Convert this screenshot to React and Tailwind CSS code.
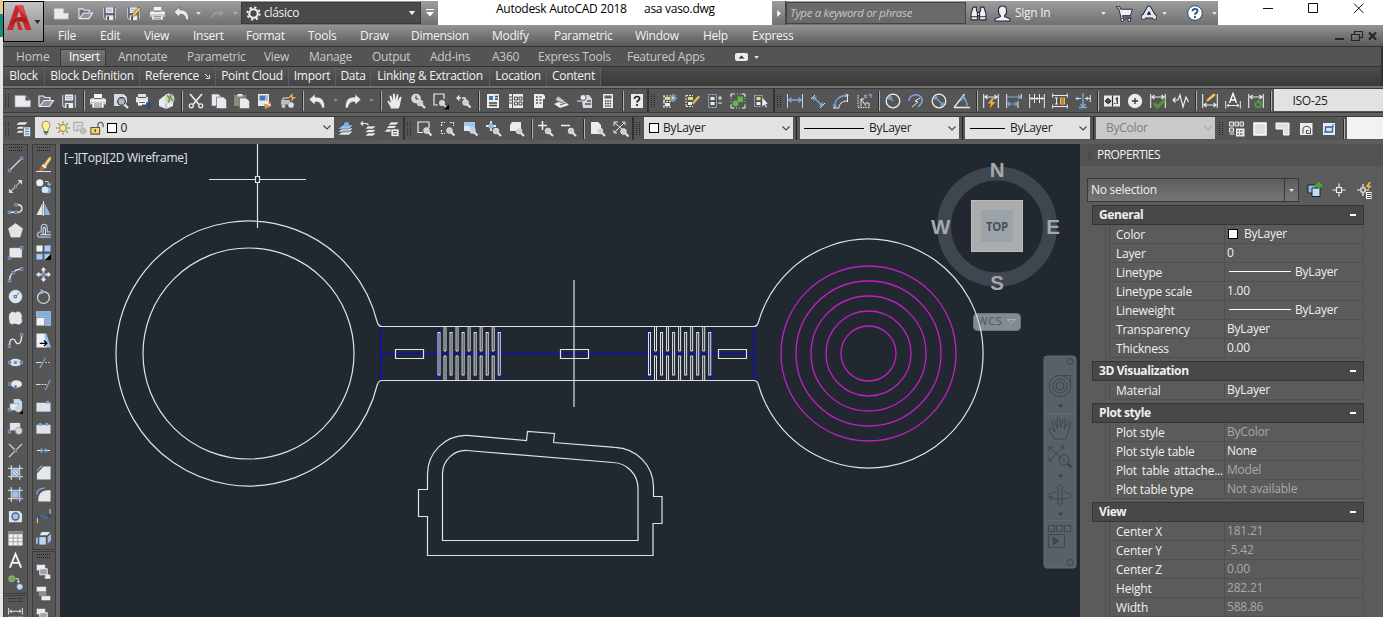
import React from "react";

const W = "#e9ebee";
const B = "#7ea6db";

const Lens = ({ x = 10, y = 10 }) => (
  <g>
    <path d={`M${x + 1.5} ${y + 1.5}l3.5 3.5`} stroke="#dfe2e6" strokeWidth="2.2" />
    <circle cx={x} cy={y} r="2.9" fill="#c9ced6" stroke="#f1f1f1" strokeWidth=".6" />
  </g>
);
const Disk = () => (
  <g>
    <path d="M1 1.500h14v13.500H3l-2-2z" fill="#5d6675" />
    <path d="M1.600 2v10.500l2 2M14.400 2v12.500" stroke="#b9c1ce" strokeWidth="1.200" fill="none" />
    <path d="M4 1.500h8v6H4z" fill="#eceef2" />
    <path d="M5 3.500h6M5 5.500h6" stroke="#8d96a6" strokeWidth=".8" />
    <path d="M4 10h8v5H4z" fill="#eceef2" />
    <path d="M5.500 11h2v4h-2z" fill="#444b57" />
  </g>
);
const Printer = () => (
  <g>
    <path d="M4 1h8v5H4z" fill="#f4f5f7" />
    <path d="M0 6.500l2-1.500h12l2 1.500v5H0z" fill="#c7ccd3" />
    <path d="M0 6.500h16v2H0z" fill="#f2f3f5" />
    <path d="M3 10h10l1 4.500H2z" fill="#fff" />
    <path d="M4 11h8M4 13h8M4 5.500h8" stroke="#4a4f58" strokeWidth=".8" />
  </g>
);
const DimH = ({ y = 5, c = W }) => (
  <path d={`M.7 1v14M15.300 1v14M2 ${y}h12M4.500 ${y - 2}L2 ${y}l2.500 2M11.500 ${y - 2}L14 ${y}l-2.500 2`} stroke={c} strokeWidth="1.100" fill="none" />
);
const Dot = ({ x, y }) => <rect x={x - 1.300} y={y - 1.300} width="2.600" height="2.600" fill="#4c5d7a" stroke={B} strokeWidth=".9" />;
const Check = () => <path d="M4 10l3.500 4L15 6.500" stroke="#4f9a3c" strokeWidth="3" fill="none" />;

const art = {
  newdoc: <path d="M0 2.500h10.500L15.500 7.500v6.500H0z M10.500 2.500v5h5" fill={W} stroke="#9aa0a8" strokeWidth=".7" />,
  open: (
    <g>
      <path d="M1 13.500V3h4.500L7 4.500h5V7" fill="#6a6f77" stroke={W} strokeWidth="1.200" />
      <path d="M1.500 13.500l4.500-6h9.500L11.500 13.500z" fill="#8b949f" stroke={W} strokeWidth="1.200" />
    </g>
  ),
  save: <Disk />,
  saveas: <g><Disk /><path d="M6 12l1.500-4 6-7 2.500 2-6.500 7.500z" fill="#f0c05a" stroke="#6a4a14" strokeWidth=".6" /></g>,
  print: <Printer />,
  preview: <g><path d="M1 1h9l4 3.500V9l-3 4H1z" fill="#d8dbe0" /><path d="M10 1v3.500h4" fill="#fff" stroke="#999" strokeWidth=".5" /><circle cx="8.500" cy="8.500" r="3.800" fill="#a9b7c9" stroke="#33373d" strokeWidth="1.200" /><path d="M11.500 11.500l3.500 3.500" stroke="#e6e6e6" strokeWidth="2.300" /></g>,
  publish: <g><path d="M2 1h8v3H2zM0 4h12v5.500H0z" fill="#dfe2e6" /><path d="M2 8h8v4.500H2z" fill="#fff" /><path d="M2 4.500h8M3 9.500h6" stroke="#555" /><path d="M6 12.500h8M11.500 9.500l3.500 3-3.500 3" stroke="#2f4d80" strokeWidth="1.800" fill="none" /></g>,
  globe: <g><path d="M0 7l5-4 9 4v6l-7 3-7-3z" fill="#e9ebef" /><path d="M7 9.500v6" stroke="#9aa0a8" /><circle cx="10" cy="6" r="5.500" fill="#dfe2e6" /><circle cx="10.500" cy="5.500" r="4.300" fill="#dfcf92" /><path d="M8 2.500c3 1 3 5 1 7M12 1.500c-1 3 0 5 2.500 6" stroke="#4b9a76" strokeWidth="1.500" fill="none" /></g>,
  cut: <g stroke={W} fill="none"><path d="M2 1l9 10.500M14 1L5 11.500" strokeWidth="1.700" /><circle cx="3.300" cy="12.800" r="2" strokeWidth="1.300" /><circle cx="12.700" cy="12.800" r="2" strokeWidth="1.300" /></g>,
  copy: <g fill={W} stroke="#65696f" strokeWidth=".7"><path d="M.5 1h7l3 3v9h-10z" /><path d="M5.500 4h7l3 3v8.500h-10z" /></g>,
  paste: <g><path d="M0 2h12v11H0z" fill="#8d8878" /><path d="M3.500 1h5v2.500h-5z" fill="#e4e4e4" /><path d="M5.500 5h6.500l3.500 3v7.500h-10z" fill={W} stroke="#65696f" strokeWidth=".7" /></g>,
  match: <g><path d="M1 1h11v12H1z" fill={W} /><path d="M2.500 2.500h6v5h-6z" fill="#3f78bf" /><path d="M10 2v6" stroke="#888" /><path d="M7 11l7-2-1 5-5 2z" fill="#d79a45" /><path d="M8 9.500l6 3" stroke="#fff" strokeWidth="1.300" /></g>,
  blockedit: <g><path d="M1 7h9v4.500H1z" fill="#b9bec7" /><path d="M3 7V5h6" stroke={W} fill="none" /><circle cx="3.500" cy="13" r="2" fill="#c3c8d0" /><circle cx="11" cy="12" r="3" fill="#dfe2e7" stroke="#777" strokeWidth=".5" /><path d="M12.500 0L8.500 4.500H12l-1 4L16 4h-3.500z" fill="#f2b744" /></g>,
  undo: <path d="M6 1L0 6.500 6 12V9c4-.500 6 1 7 6h2.500c.500-8-3-11-9.500-11z" fill={W} stroke="#50545a" strokeWidth=".6" />,
  redo: <path d="M10 1l6 5.500L10 12V9c-4-.500-6 1-7 6H.5C0 7 3.500 4 10 4z" fill={W} stroke="#50545a" strokeWidth=".6" />,
  redodim: <path d="M10 3l5 4.500L10 12V9.500C6 9 4 9.500 3 13H1.500c0-5 3-7.500 8.500-7.500z" fill="#9a9a9a" stroke="#828282" strokeWidth=".5" />,
  pan: <path d="M4 15.500C3 12 .5 9.500 .5 8.500s1-1 2 0l1.500 1.500L2.500 3.500c0-1.200 1.500-1.300 1.900-.3L6 7.500 5.900 1.500c0-1.400 1.900-1.400 2 0L8.400 7l1.200-5c.3-1.200 2-.9 1.800.5L10.600 8l2.200-3.700c.7-1 2.100-.3 1.700.9C13.300 8 13.500 13 11.500 15.500z" fill={W} />,
  zoomrt: <g><circle cx="6" cy="5.500" r="4.800" fill="#d7dadf" /><path d="M6 2.500v3.500h2.500" stroke="#333" fill="none" /><Lens x={10} y={10} /></g>,
  zoomwin: <g><path d="M1 10.500V1h11v6M1 10v1.500h5" stroke={W} fill="none" strokeWidth="1.200" /><Lens x={9.500} y={9.500} /></g>,
  zoomcorner: <g><path d="M1 10V1h10v5M1 10v2h4" stroke={W} fill="none" strokeWidth="1.200" /><circle cx="9" cy="10" r="3" fill="#d3d7dc" /><path d="M11 12l2 2" stroke={W} strokeWidth="1.500" /><path d="M16 11.500v5h-5z" fill="#000" /></g>,
  zoomprev: <g><path d="M1 5h4M3.500 2.500L1 5l2.500 2.500M6 5h3v2" stroke={W} fill="none" strokeWidth="1.300" /><Lens x={9.500} y={9.500} /></g>,
  zoomdash: <g><path d="M1.500 5V1.500H5M10 1.500h3.500V5M1.500 9v3.500H5" stroke={W} fill="none" strokeWidth="1.200" strokeDasharray="2 1" /><Lens x={9.500} y={9.500} /></g>,
  zoomblue: <g><path d="M1 1h11v9H1z" fill="#9cc8ee" /><path d="M1 5h6v5H1z" fill="#d6ecfb" /><Lens x={9.500} y={9.500} /></g>,
  zoomcen: <g><path d="M5 0v3M5 7v3M0 5h3M7 5h3" stroke={W} strokeWidth="1.800" /><circle cx="5" cy="5" r="2.600" fill="#8db8f2" /><Lens x={10} y={10} /></g>,
  zoomobj: <g><path d="M3 1h9v6l-3 3H1V4z" fill={W} /><Lens x={10} y={10} /></g>,
  zoomin: <g><path d="M4.500 0v9M0 4.500h9" stroke={W} strokeWidth="1.600" /><Lens x={10} y={10} /></g>,
  zoomout: <g><path d="M0 4.500h9" stroke={W} strokeWidth="1.600" /><Lens x={10} y={10} /></g>,
  zoomall: <g><path d="M1 1h7l3 3v9H1z" fill={W} /><Lens x={10} y={10} /></g>,
  zoomext: <g><path d="M2 2l9 8M11 2L2 11M1 5V1h4M9 1h3v3M1 9v3h3" stroke={W} fill="none" /><Lens x={10.500} y={10.500} /></g>,
  props: <g><path d="M2 1h12v14H2z" fill={W} /><path d="M4 3h4v4H4z" fill="#3f78bf" /><path d="M10 3.500h3M10 6h3M4 10h8M4 12.500h8" stroke="#444" strokeWidth="1.300" /></g>,
  dc: <g><path d="M1 1h3v14H1zM5 1h10v14H5z" fill={W} /><path d="M1 4h3M1 7h3M1 10h3" stroke="#444" /><path d="M6.500 4h3v3h-3zM11 4h3v3h-3zM6.500 9h3v3h-3zM11 9h3v3h-3z" fill="none" stroke="#444" /></g>,
  palette: <g><path d="M3 1h9l2 2v3h-2v9H3z" fill={W} /><path d="M5 4h2M8.500 4h2M5 7h2M8.500 7h2M5 10h2M8.500 10h2" stroke="#555" strokeWidth="1.600" /></g>,
  sheets: <g><path d="M0 11l9-4 6 5-9 3z" fill={W} /><path d="M1 7l3-4 7 5-3 2z" fill="#c4c9d1" stroke="#555" strokeWidth=".7" /><path d="M6 12l6-2" stroke="#666" /></g>,
  markup: <g><path d="M4 2h8l3 4v9H6z" fill="#d4d8de" /><path d="M1 3h7M1 6h5M10 8h4M8 11h6" stroke="#555" strokeWidth="1.300" /><circle cx="6" cy="4.500" r="3" fill={W} stroke="#555" /><path d="M0 8h5" stroke={W} /></g>,
  calc: <g><path d="M3 1h10v14H3z" fill={W} /><path d="M4.500 2.500h7v3h-7z" fill="#5a6069" /><path d="M5 8h6M5 10.500h6M5 13h6" stroke="#444" strokeWidth="1.500" strokeDasharray="1.500 .8" /></g>,
  help: <g><path d="M2 1h12v14H2z" fill={W} /><path d="M5.500 6c0-3.500 5-3 5-.3C10.500 7.500 8 7.500 8 9.500M8 11v2" stroke="#222" strokeWidth="1.700" fill="none" /></g>,
  ga: <g><path d="M3 3v11M2 3h7M2 8.500h9M2 14h8" stroke={W} strokeDasharray="2 1" /><path d="M4 4h5v3H4z" fill="#e6d76a" /><path d="M4 10h5v3H4z" fill={W} /><path d="M12 1v8M8 5h8M9.500 2l5 6M14.500 2l-5 6" stroke="#b8dcf8" /></g>,
  gb: <g><path d="M2 2v12M2 2.500h7M2 13.500h7" stroke={W} strokeDasharray="2 1" /><path d="M4 4h5v3H4z" fill="#e6d76a" /><path d="M4 9h4v3H4z" fill={W} /><path d="M8 10l6-7 2 1-6.500 7z" fill="#e8c46e" stroke="#c99a3f" strokeWidth=".6" /></g>,
  gc: <g><path d="M1.500 1.500h8v13h-8z" fill="none" stroke="#8db8f2" strokeDasharray="2 1" /><path d="M3.500 4h4v3h-4zM3.500 9h4v3h-4z" fill={W} /><path d="M11 5h4M13 3v4M11 10h4" stroke={W} strokeWidth="1.200" /></g>,
  gd: <g><path d="M1 4V1h3M12 1h3v3M15 12v3h-3M4 15H1v-3" stroke={W} fill="none" /><path d="M1 1h14v14H1z" fill="none" stroke={W} strokeDasharray="1 2" strokeWidth=".7" /><circle cx="5.500" cy="10.500" r="3" fill="#5cb848" /><path d="M7.500 3.500h5.500V9H7.500z" fill="#5cb848" /></g>,
  ge: <g><path d="M1.500 2.500h8v11h-8z" fill="none" stroke="#8db8f2" strokeDasharray="2 1" /><path d="M3.500 4h4v3h-4z" fill="#e6d76a" /><path d="M3.500 9h4v3h-4z" fill={W} /><path d="M9 4v10l2.300-2 1.500 3 1.500-.700-1.500-3H15.500z" fill="#f1f1f1" stroke="#444" strokeWidth=".5" /></g>,
  dlin: <g><path d="M.5 1v14M15.500 1v14" stroke="#c4d6ee" /><path d="M1 7h14M4.500 4.500L2 7l2.500 2.500M11.500 4.500L14 7l-2.500 2.500" stroke={B} strokeWidth="1.300" fill="none" /></g>,
  dali: <g><path d="M1 6l4-4M10 15l5-5" stroke={W} /><path d="M3.500 4.500l9 8M3.500 7.500v-3h3M12.500 9.500v3h-3" stroke={B} strokeWidth="1.300" fill="none" /></g>,
  darc: <g fill="none"><path d="M6 15c0-4 3-7 8-7" stroke={W} /><path d="M1.500 14C1.500 7 6 2.500 14 2.500M3.500 12l-2 2.500-1-3M12 1l3 1.500L12 4" stroke={B} strokeWidth="1.300" /><path d="M0 15h6M14.500 1v8" stroke={W} /></g>,
  dord: <g fill="none"><path d="M2 2v12.500h12" stroke={W} strokeDasharray="1.500 1" /><path d="M5 13.500V6l5 7M5 6h3M9 10h4v3.500" stroke={W} /><path d="M8 2l3 3M11 2L8 5M13 1l2 2M15 1v4" stroke={B} strokeWidth="1.200" /></g>,
  drad: <g fill="none"><circle cx="8" cy="8" r="6.800" stroke={W} strokeWidth="1.300" /><path d="M8 8L4 4M4 7V4h3" stroke={B} strokeWidth="1.300" /></g>,
  djog: <g fill="none"><path d="M1 8C1 2 9 0 13 4c3 4 0 7-3 10" stroke={B} strokeWidth="1.500" /><path d="M12 5L7 8l3 1-6 5" stroke={W} /></g>,
  ddia: <g fill="none"><circle cx="8" cy="8" r="6.800" stroke={W} strokeWidth="1.300" /><path d="M4 4l8 8M4 7V4h3M12 9v3H9" stroke={B} strokeWidth="1.200" /></g>,
  dang: <g fill="none"><path d="M0 14.500h16M0 14.500L10.500 1" stroke={W} strokeWidth="1.300" /><path d="M8 4.500c4 1 5 5 5 9M7.500 8V4.500h3.500" stroke={B} strokeWidth="1.300" /></g>,
  dquick: <g><DimH y={4} /><path d="M9 5L5 10.500h3l-1.500 5L12.500 9H9l2-4z" fill="#f4a93a" /></g>,
  dbase: <g fill="none"><path d="M.7 1v14M15.300 1v5M12 8v7" stroke={W} /><path d="M1 4h14M1 11h10M12 2L14.500 4 12 6M9 9l2.500 2L9 13M4 9l-2.500 2L4 13" stroke={B} strokeWidth="1.200" /></g>,
  dcont: <path d="M.7 1v14M5.500 1v9M10.500 1v9M15.300 1v14M1 5.500h14M3 4v3M8 4v3M13 4v3" stroke={W} fill="none" />,
  dspace: <g><path d="M.7 .5v4M15.300 .5v4M1 2.500h14M.7 15.500v-4M15.300 15.500v-4M1 13.500h14M4.500 5v6M3 5h3M3 11h3" stroke={W} fill="none" /><path d="M8 4.500h5v7H8z" fill="#f2b744" /><path d="M9 6h3M9 8h3M9 10h3" stroke="#6a4a14" strokeWidth=".8" /></g>,
  dbreak: <g fill="none"><path d="M15.300 2v7M0 5.500h6M10 5.500h5M12 3.500v4" stroke={W} /><path d="M8 0v13M4 14.500h8M5.500 11L8 14l2.500-3M3 4L.8 5.500 3 7" stroke={B} strokeWidth="1.400" /></g>,
  dtol: <g><path d="M0 2.500h16v11H0z" fill={W} /><path d="M8.500 2.500v11" stroke="#333" strokeWidth="1.200" /><circle cx="4" cy="8" r="2" fill="none" stroke="#222" strokeWidth="1.200" /><path d="M.8 8h6.500M4 4.800v6.500" stroke="#222" /><path d="M10 10.500h1.300M13.200 11V5l-1.400 1.200" stroke="#222" fill="none" strokeWidth="1.200" /></g>,
  dcen: <g><circle cx="8" cy="8" r="7.200" fill={W} /><path d="M8 5v6M5 8h6" stroke="#333" strokeWidth="1.300" /></g>,
  dins: <g><DimH y={4} /><Check /></g>,
  djl: <path d="M0 7h5l2-5 3 12 3-10 2.500 5M2.500 4.500L0 7l2.500 2.500" stroke={W} fill="none" strokeWidth="1.200" />,
  dedit: <g><DimH y={12} /><path d="M4 9l1-3 7-6 2 2-7 6z" fill="#f3c767" stroke="#6d4d1a" strokeWidth=".5" /></g>,
  dtedit: <g><path d="M.7 8v7.500M15.300 8v7.500M2 12.500h12M4 11l-2 1.500L4 14M12 11l2 1.500-2 1.500" stroke={W} fill="none" /><path d="M4.500 10L8 .5l3.500 9.500M5.500 7h5" stroke="#fff" strokeWidth="1.400" fill="none" /></g>,
  dupd: <g><DimH y={4} /><circle cx="10" cy="11.500" r="2.800" fill="none" stroke="#4f9a3c" strokeWidth="1.800" /><path d="M10 6l3.500 2.500L10 11z" fill="#4f9a3c" /></g>,

  layers: <g><path d="M4 1h9l-3 3H1zM3.500 5.500h7L8.500 8H1zM3.500 9.500H8V12H1z" fill={W} stroke="#454545" strokeWidth=".5" /><path d="M8.500 6h7v9.500h-7z" fill="#dbe8f7" stroke="#555" strokeWidth=".6" /><path d="M10 8h4M10 10.500h4M10 13h4" stroke="#4f7db8" strokeWidth="1.200" /></g>,
  laya: <g><path d="M0 14l5-4h10l-4 4zM0 11l5-4h10l-4 4z" fill={W} stroke="#4a4a4a" strokeWidth=".6" /><path d="M0 8l5-4h10l-4 4z" fill="#9cc4ee" stroke="#3a5a86" strokeWidth=".6" /><circle cx="8.500" cy="3.500" r="2.500" fill="#7fb0e6" /></g>,
  layb: <g><path d="M4 15l3-3h8l-3 3zM4 11.500l3-3h8l-3 3zM4 8l3-3h8l-3 3z" fill={W} stroke="#4a4a4a" strokeWidth=".6" /><path d="M0 2.500h5c2 0 2 1 2 2M2 .5L0 2.500l2 2" stroke={W} fill="none" strokeWidth="1.200" /></g>,
  layc: <g><path d="M4 4l3-3h8l-3 3zM2 7.500l3-3h8l-3 3zM0 11l3-3h8l-3 3z" fill={W} stroke="#4a4a4a" strokeWidth=".6" /><path d="M7 8h8v7.500H7z" fill={W} stroke="#555" strokeWidth=".7" /><path d="M9 10.500h4M9 13h4" stroke="#555" /></g>,
  bulb: <g><path d="M8 0a5 5 0 0 0-2.500 9v3h5V9A5 5 0 0 0 8 0z" fill="#fdf2a0" stroke="#8a7b35" strokeWidth="1" /><path d="M5.500 13h5M6.500 15h3" stroke="#555" strokeWidth="1.300" /></g>,
  sun: <g><circle cx="8" cy="8" r="4" fill="#fbe9a0" stroke="#8d6f22" strokeWidth="1.100" /><path d="M8 .5v2M8 13.500v2M.5 8h2M13.500 8h2M2.700 2.700l1.400 1.400M11.900 11.900l1.400 1.400M13.300 2.700l-1.400 1.400M2.700 13.300l1.400-1.400" stroke="#7a5c1c" strokeWidth="1.300" /></g>,
  freeze: <g><path d="M1 11V1.500h10v4M1 11h5" stroke="#a9a9a9" fill="none" strokeWidth="1.300" /><path d="M4.500 5h6v5h-6z" fill="#d9d9d9" stroke="#b2b2b2" /><circle cx="11.500" cy="11.500" r="3.500" fill="#bdbdbd" stroke="#a5a5a5" strokeDasharray="1.500 1" /></g>,
  lock: <g><path d="M9 7.500V5c0-4.500 6-4.500 6 0v2" stroke="#666" strokeWidth="1.500" fill="none" /><path d="M1 7.500h10V15H1z" fill="#f3d77c" stroke="#6d5620" strokeWidth="1.200" /><path d="M6 9.500v3" stroke="#5d4a1a" strokeWidth="1.500" /></g>,
  va: <g><path d="M.5 1h4v4h-4zM6 1h3.500v4H6zM11 1h3.500v4H11zM.5 7h4v4h-4z" fill="#777" stroke={W} /><path d="M.5 13h5" stroke={W} /><path d="M7 7.500h8.500v8H7z" fill={W} /><path d="M8.500 10h5.500M8.500 13h5.500" stroke="#555" strokeWidth="1.300" strokeDasharray="1.500 1" /></g>,
  vb: <path d="M2 2h12v12H2z" fill="#dcdee2" stroke="#fff" strokeWidth="1.500" />,
  vc: <path d="M1 2h13v12H8.500V8H1z" fill="#dcdee2" stroke="#fff" />,
  vd: <g><path d="M2 2h12.500v12H2z" fill="#e9ebee" /><path d="M5 12.500V8.500c0-4.500 7.500-4 7.500 0v4H8.500v-3h2" stroke="#444" fill="none" /></g>,
  ve: <g><path d="M2 2h12v12H2z" fill="#e9ebee" /><path d="M4.500 6h7v5h-7z" fill="#cfe0f6" stroke="#325ea8" strokeWidth="1.300" /><path d="M12 3v3M3 11h2" stroke="#325ea8" /></g>,

  line: <g><path d="M1.500 14.500L14.500 1.500" stroke={W} strokeWidth="1.300" /><Dot x={1.500} y={14.500} /><Dot x={14.500} y={1.500} /></g>,
  xline: <g><path d="M2 14L14 2" stroke="#b9b9b9" strokeWidth="1.300" /><path d="M10 1h5v5zM1 10v5h5z" fill="#d3d3d3" /><Dot x={8} y={8} /></g>,
  pline: <g fill="none"><path d="M1.500 12h8.500c6.500 0 6.500-8 0-8" stroke={W} strokeWidth="1.400" /><Dot x={1.500} y={12} /><Dot x={8.500} y={12} /><Dot x={8.500} y={4} /></g>,
  poly: <path d="M8 .5l7.500 5.500L12.700 15H3.300L.5 6z" fill="#e0e4ea" stroke="#f4f4f4" strokeWidth=".6" />,
  rect: <g><path d="M2 3.500h12.500v9.500H2z" fill="#e6e9ee" stroke="#fff" strokeWidth=".6" /><Dot x={1.500} y={14} /><Dot x={14.500} y={3} /></g>,
  arc: <g><path d="M1.500 14.500C2 7 6 3 14 2" stroke={W} strokeWidth="1.300" fill="none" /><Dot x={1.500} y={14.500} /><Dot x={5.500} y={6} /><Dot x={14.500} y={2} /></g>,
  circle: <g><circle cx="8" cy="8" r="6.800" fill="#dbe4ef" stroke="#fff" strokeWidth=".6" /><path d="M8 8l4-4" stroke="#49678f" /><rect x="6.500" y="7" width="2.500" height="2.500" fill="#a9c7ee" stroke="#49678f" strokeWidth=".8" /></g>,
  cloud: <path d="M3 2c2-2 4 0 5 0 2-2 6-1 6 2 1 2 0 3 0 4 2 3 0 6-3 6-2 0-2-1-4-1-3 2-6 0-5-3C1 8 1 3 3 2z" fill="#e4e7ec" stroke="#fff" strokeWidth=".6" />,
  spline: <g><path d="M1.500 14C1.500 4 7 6 8 9s6.500 5 6.500-7" stroke={W} strokeWidth="1.400" fill="none" /><Dot x={1.500} y={14} /><Dot x={14.500} y={2} /></g>,
  ellipse: <g><ellipse cx="8" cy="8" rx="6.500" ry="4" fill="#dbe2ec" /><Dot x={1.800} y={8} /><Dot x={8} y={8} /><Dot x={14.200} y={8} /></g>,
  earc: <g><ellipse cx="9" cy="7.500" rx="6" ry="4" fill="#e6eaf0" /><Dot x={2} y={7.500} /><Dot x={8} y={10.500} /></g>,
  insblk: <g><path d="M6 0h6l3 3v8H6z" fill="#c5d8ee" /><path d="M2 5h9v7H2z" fill="#e6eaf0" stroke="#6d8fc0" strokeWidth=".6" /><circle cx="11" cy="10.500" r="3.500" fill="#d0d4da" /><Dot x={1.500} y={11.500} /><path d="M16 12v4h-4z" fill="#000" /></g>,
  mkblk: <g><path d="M2 2h11v8H2z" fill="#e1e5eb" /><circle cx="11.500" cy="10.500" r="3.800" fill="#d3d6dc" stroke="#777" strokeWidth=".5" /><Dot x={1.500} y={11.500} /></g>,
  point: <g><path d="M1 1l7 7M1 15L15 1" stroke="#d8dade" strokeWidth="1.300" /><Dot x={8} y={8} /></g>,
  hatch: <g><path d="M3.500 0v16M12.500 0v16M0 3.500h16M0 12.500h16" stroke={W} /><path d="M4.500 4.500h7v7h-7z" fill="#cfe0f5" /><path d="M4.500 8L8 11.500M4.500 4.500l7 7M8 4.500L11.500 8M9 15l6-6" stroke="#5e8cc9" /></g>,
  grad: <g><path d="M3.500 0v16M12.500 0v16M0 3.500h16M0 12.500h16" stroke={W} /><path d="M4.500 4.500h7v7h-7z" fill="#9dc0ee" /><path d="M9 15l6-6" stroke="#5e8cc9" /></g>,
  region: <g><path d="M1 2h11l3 3v9H1z" fill="#dde3eb" /><circle cx="8" cy="8" r="3.800" fill="#a8c2e4" stroke="#35507a" strokeWidth="1.200" /></g>,
  table: <g><path d="M.5 .5h15v15H.5z" fill="#f1f2f4" /><path d="M.5 .5h15v3H.5z" fill="#7c8590" /><path d="M1 7.500h14M1 11.500h14M5.500 4v11M10.500 4v11" stroke="#9aa0a8" /></g>,
  textA: <path d="M2 15.500L8 1l6 14.500M4.200 10.500h7.600" stroke="#f6f6f6" strokeWidth="2" fill="none" />,
  addsel: <g><circle cx="4" cy="4" r="3.200" fill="#69a84f" stroke="#9ad184" strokeWidth=".8" /><circle cx="12.500" cy="12.500" r="3" fill="#c6dcf5" stroke="#7fa3d4" strokeWidth=".8" /><path d="M8 4h3v4M9.500 6.500L11 8l1.500-1.500" stroke={W} fill="none" /></g>,
  measure: <g><path d="M.7 0v7M15.300 0v7M2 3.500h12M4 2L2 3.500 4 5M12 2l2 1.500L12 5" stroke={W} fill="none" /><path d="M.5 9h15v7H.5z" fill="#e0ae3c" /><path d="M3 9v3M6 9v3M9 9v3M12 9v3" stroke="#5d4311" /></g>,

  erase: <g><path d="M8 8l6-8h2v3l-5 7z" fill="#f2cf7e" stroke="#8a6420" strokeWidth=".5" /><path d="M5.500 9.500l4 3-3 2.500H3z" fill="#c8642c" /><path d="M7.500 7.500l4 3-1.500 2-4-3z" fill="#efefef" /><path d="M0 15.500h16" stroke={W} /></g>,
  copyo: <g><circle cx="4" cy="4" r="3.800" fill="#eceef1" /><path d="M9.500 3c3-1 4.500 0 4.500 3M12 5l2 2 2-2" stroke={W} fill="none" /><circle cx="12.500" cy="12" r="3.500" fill="#87aee0" /><circle cx="9.500" cy="11.500" r="3.500" fill="#d7e6f8" /></g>,
  mirror: <g><path d="M7 2v13H.5z" fill="#e4e6ea" /><path d="M9 2v13h6.500z" fill="#8fb4e0" /><path d="M8 0v16" stroke="#fff" strokeWidth=".9" /></g>,
  offset: <g fill="none"><path d="M15.500 15H2.500c-2.500-4 .5-5.500 3-5.500V5.500c0-5.500 6.500-5.500 6.500 0v4h3.500" stroke="#a9c4e8" strokeWidth="1.300" /><path d="M16 12.500H4.500M7.500 12V6c0-2 2.500-2 2.500 0v6" stroke={W} strokeWidth="1.100" /></g>,
  array: <g><path d="M.5 .5H7V7H.5z" fill="#f1f1f1" /><path d="M9 .5h6.500V7H9zM.5 9.500H7v6H.5zM9 9.500h6.500v6H9z" fill="#a9cbf4" stroke="#6b98d4" strokeWidth=".6" /><path d="M16 9.500v6.500h-6.500z" fill="#000" /></g>,
  move: <g><path d="M8 0l3 3.500H9V6H7V3.500H5zM8 16l3-3.500H9V10H7v2.500H5zM0 8l3.500-3v2H6v2H3.500v2zM16 8l-3.500-3v2H10v2h2.500v2z" fill={W} /><Dot x={8} y={8} /></g>,
  rotate: <g><circle cx="8" cy="9" r="6.300" fill="none" stroke="#d5d7da" strokeWidth="1.400" /><path d="M5 0l5 3-5 3z" fill="#8fb4e0" /></g>,
  scale: <g><path d="M.5 .5h15v15h-5.500V6H.5z" fill="#87aee2" stroke="#c5dbf5" strokeWidth=".6" /><path d="M.5 7H9v8.500H.5z" fill="#f1f3f6" /></g>,
  stretch: <g><path d="M.5 .5h9l1.500 15H.5z" fill="#eef1f5" /><path d="M9 .5h2l5 15h-5.500z" fill="#9cc0ea" /><path d="M4 11h7M8.500 8l3 3-3 3" stroke="#000" strokeWidth="1.400" fill="none" /></g>,
  trim: <g><path d="M0 8h6M10 8h1.500M13 8h1.500" stroke={W} /><path d="M4 14L10 3" stroke="#7da2d4" strokeWidth="1.300" /></g>,
  extend: <g><path d="M0 8h5M6 8h2M9 8h2" stroke={W} /><path d="M10 14L15 3" stroke="#7da2d4" strokeWidth="1.300" /></g>,
  brk1: <g><path d="M.5 4h15v9.500H.5z" fill="#dfe3e9" /><path d="M11 2h3v3h-3z" fill="#7ea6db" /></g>,
  brk2: <g><path d="M.5 4h15v9.500H.5z" fill="#dfe3e9" /><path d="M3 2h3v3H3zM10 2h3v3h-3z" fill="#7ea6db" /></g>,
  join: <g><path d="M1 8h4M11 8h4" stroke={W} strokeWidth="1.200" /><path d="M5 5l3 3-3 3zM11 5L8 8l3 3z" fill="#7eb2ef" /></g>,
  chamfer: <g><path d="M8 1.500h7.500v14H1V9z" fill="#e4e7ec" /><path d="M1 6l5.500-5.500" stroke="#7ea6db" strokeWidth="1.500" /></g>,
  fillet: <g><path d="M12 3.500h3.500v12H2.500v-3c0-5 4-9 9.500-9z" fill="#e4e7ec" /><path d="M1 8c0-4 3-6.500 8-7" stroke="#7ea6db" strokeWidth="1.500" fill="none" /></g>,
  blend: <g fill="none"><path d="M1.500 15V8M15 6V0" stroke="#ddd" /><path d="M2.500 8C6 3 9 14 13.500 7" stroke="#3f71b5" strokeWidth="1.800" /><circle cx="2.500" cy="8" r="1.600" stroke="#223a60" /><circle cx="14" cy="7" r="1.600" stroke="#223a60" /></g>,
  explode: <g><path d="M3.500 6.500h7v8h-7z" fill="#bcd6f4" /><path d="M6 1h9l-3 3.500H4z" fill="#dfe9f5" /><path d="M12.500 6L16 3v7l-3.500 3.500zM0 8l2-2v7l-2 1z" fill="#9bbde8" /></g>,
  ordf: <g><path d="M.5 .5H10V7H.5zM10 11h5.500v5H9z" fill={W} stroke="#555" strokeWidth=".5" /><path d="M4 5h8v6.500H4z" fill="#9aa3b0" stroke="#f1f1f1" /></g>,
  ordb: <g><path d="M3 6h8v5H3z" fill="#8b9099" /><path d="M.5 .5H11V6H.5zM5.500 10.500h10v5h-10z" fill="#eceef2" stroke="#555" strokeWidth=".5" /></g>,
};

const Icon = ({ n, size = "size-4" }) => (
  <svg viewBox="0 0 16 16" className={`${size} flex-none overflow-visible`}>{art[n]}</svg>
);

const Arrow = ({ c = "#e8e8e8" }) => (
  <svg viewBox="0 0 6 4" className="h-[3px] w-[5px] flex-none"><path d="M0 0h6L3 4z" fill={c} /></svg>
);
const Chevron = ({ c = "#444" }) => (
  <svg viewBox="0 0 8 5" className="h-[5px] w-2 flex-none"><path d="M.5 .5L4 4 7.500 .5" fill="none" stroke={c} strokeWidth="1.100" /></svg>
);

const GripV = () => (
  <div className="flex w-[8.500px] flex-none items-center justify-center">
    <svg viewBox="0 0 4 14" className="h-[14px] w-1"><path d="M.5 0v14M3.500 0v14" stroke="#222" strokeDasharray="1 1" /></svg>
  </div>
);
const GripH = () => (
  <div className="flex h-2 flex-none items-center justify-center">
    <svg viewBox="0 0 14 4" className="h-1 w-[14px]"><path d="M0 .5h14M0 3.500h14" stroke="#1c1c1c" strokeDasharray="1 1" /></svg>
  </div>
);
const Sep = () => (
  <div className="flex w-1.5 flex-none items-center justify-center">
    <div className="h-5 w-0.5 border-l border-[#2c2c2c] bg-[#b0b0b0]" />
  </div>
);

const Tools = ({ items }) =>
  items.map((n, i) =>
    n === "|" ? <Sep key={i} /> : n === "v" ? (
      <div key={i} className="flex w-[13px] flex-none items-center justify-center"><Arrow c="#8c8c8c" /></div>
    ) : (
      <div key={i} className="flex w-[23px] flex-none items-center justify-center"><Icon n={n} /></div>
    )
  );

const bar1 = "newdoc open save | print preview publish globe | cut copy paste match blockedit | undo v redo v | pan zoomrt zoomcorner zoomprev | props dc palette sheets markup calc | help".split(" ");
const bar2 = "ga gb gc gd ge".split(" ");
const bar3 = "dlin dali darc dord | drad djog ddia dang | dquick dbase dcont dspace dbreak | dtol dcen dins djl | dedit dtedit dupd |".split(" ");
const zoomBar = "zoomwin zoomdash zoomblue zoomcen zoomobj | zoomin zoomout | zoomall zoomext".split(" ");
const drawCol = "line xline pline poly rect arc circle cloud spline ellipse earc insblk mkblk point hatch grad region table textA addsel".split(" ");
const modCol = "erase copyo mirror offset array move rotate scale stretch trim extend brk1 brk2 join chamfer fillet blend explode".split(" ");

const menus = [
  ["File", "w-[42px]"], ["Edit", "w-[44px]"], ["View", "w-[49px]"], ["Insert", "w-[53px]"], ["Format", "w-[62px]"],
  ["Tools", "w-[52px]"], ["Draw", "w-[51px]"], ["Dimension", "w-[81px]"], ["Modify", "w-[62px]"], ["Parametric", "w-[81px]"],
  ["Window", "w-[68px]"], ["Help", "w-[49px]"], ["Express", "w-[60px]"],
];
const tabs = [
  ["Annotate", "w-[69px]"], ["Parametric", "w-[77px]"], ["View", "w-[45px]"], ["Manage", "w-[63px]"], ["Output", "w-[58px]"],
  ["Add-ins", "w-[62px]"], ["A360", "w-[46px]"], ["Express Tools", "w-[89px]"], ["Featured Apps", "w-[108px]"],
];
const panels = [
  ["Block", "w-[42px]"], ["Block Definition", "w-[95px]"], ["Reference", "w-[76px]"], ["Point Cloud", "w-[73px]"],
  ["Import", "w-[47px]"], ["Data", "w-[35px]"], ["Linking & Extraction", "w-[119px]"], ["Location", "w-[57px]"], ["Content", "w-[54px]"],
];

function TitleBar() {
  return (
    <div className="flex h-[25px] items-start bg-white pt-px text-black">
      <div className="flex h-6 w-[435px] flex-none items-center bg-linear-to-b from-[#9d9d9d] to-[#707070] pl-[46px]">
        {["newdoc", "open", "save", "saveas", "print", "undo"].map((n) => (
          <div key={n} className="flex w-6 flex-none justify-center"><Icon n={n} size="size-[15px]" /></div>
        ))}
        <div className="flex w-[11px] justify-center"><Arrow /></div>
        <div className="flex w-[26px] justify-center"><Icon n="redodim" size="size-[15px]" /></div>
        <div className="flex w-[11px] justify-center"><Arrow c="#b5b5b5" /></div>
        <div className="flex h-[22px] w-[180px] flex-none items-center border border-[#3a3a3a] bg-[#4a4a4a] px-1 text-[#f0f0f0]">
          <svg viewBox="0 0 16 16" className="mr-[3px] size-[15px] flex-none">
            <circle cx="8" cy="8" r="4.500" fill="none" stroke="#f3f3f3" strokeWidth="2.200" />
            <circle cx="8" cy="8" r="6.600" fill="none" stroke="#f3f3f3" strokeWidth="2" strokeDasharray="2.400 2.780" />
          </svg>
          <span className="flex-1">clásico</span>
          <svg viewBox="0 0 8 5" className="h-1 w-2"><path d="M0 0h8L4 5z" fill="#eee" /></svg>
        </div>
        <svg viewBox="0 0 8 8" className="ml-[5px] size-2"><path d="M0 .5h8" stroke="#fff" strokeWidth="1.300" /><path d="M0 3h8L4 7.500z" fill="#fff" /></svg>
      </div>
      <div className="flex h-4 w-[334px] flex-none items-center pl-[58px] whitespace-pre">
        <span className="w-[148px]">Autodesk AutoCAD 2018</span>
        <span>asa vaso.dwg</span>
      </div>
      <div className="flex h-6 w-[446px] flex-none items-center bg-linear-to-b from-[#9d9d9d] to-[#707070]">
        <div className="flex h-full w-3.5 items-center justify-center border-r border-[#444]">
          <svg viewBox="0 0 4 8" className="h-[7px] w-1"><path d="M0 0l4 4-4 4z" fill="#fff" /></svg>
        </div>
        <div className="flex h-[22px] w-[180px] flex-none items-center border border-[#454545] bg-[#6a6a6a] pl-[3px] text-[11.500px] tracking-[-.35px] text-[#c6c6c6] italic">Type a keyword or phrase</div>
        <svg viewBox="0 0 16 16" className="ml-1 size-[17px] flex-none" fill="none" stroke="#222b3a" strokeWidth="1">
          <path d="M3 2h3v3l1 2v7H1V8zM13 2h-3v3L9 7v7h6V8zM7 7h2v3H7z" fill="#eef1f5" />
          <path d="M1 11h6M9 11h6" />
        </svg>
        <svg viewBox="0 0 16 16" className="ml-[7px] size-[17px] flex-none" fill="#eef1f5" stroke="#222b3a">
          <path d="M8 1c5 0 4.500 7 2 9v1l5 2v2H1v-2l5-2v-1C3.500 8 3 1 8 1z" />
        </svg>
        <span className="ml-1 w-[86px] text-[#efefef]">Sign In</span>
        <Arrow />
        <svg viewBox="0 0 16 16" className="ml-2.5 size-[17px] flex-none" fill="#eef1f5" stroke="#222b3a" strokeWidth=".9">
          <path d="M.5 1.500h3l1 2.500h11l-2 6H6l.5 1.500H14V13H5L2.500 3H.5z" /><circle cx="6" cy="14" r="1.400" /><circle cx="12.500" cy="14" r="1.400" />
        </svg>
        <svg viewBox="0 0 16 16" className="ml-2 size-4 flex-none" fill="none">
          <path d="M8 3L12.500 11h-9z" stroke="#222b3a" strokeWidth="5" strokeLinejoin="round" />
          <circle cx="2.500" cy="12" r="2.700" fill="#222b3a" /><circle cx="13.500" cy="12" r="2.700" fill="#222b3a" />
          <path d="M8 3L12.500 11h-9z" stroke="#dfe6f2" strokeWidth="3" strokeLinejoin="round" />
          <path d="M8 6l2 3.700H6z" fill="#222b3a" />
          <circle cx="2.500" cy="12" r="1.900" fill="#dfe6f2" /><circle cx="13.500" cy="12" r="1.900" fill="#dfe6f2" />
        </svg>
        <span className="ml-[5px] flex"><Arrow /></span>
        <svg viewBox="0 0 16 16" className="ml-5 size-4 flex-none">
          <circle cx="8" cy="8" r="7.300" fill="#fff" stroke="#2b4a78" />
          <path d="M5.500 6.300c0-3.300 5-3 5-.2C10.500 8 8 7.800 8 9.800M8 11v2" stroke="#27508c" strokeWidth="1.900" fill="none" />
        </svg>
        <span className="ml-[9px] flex"><Arrow /></span>
      </div>
      <svg viewBox="0 0 165 24" className="h-6 w-[165px] flex-none" fill="none" stroke="#111">
        <path d="M45 7.500h10M90.500 2.500h9v9h-9zM136 2.500l9.500 9.500M145.500 2.500L136 12" />
      </svg>
    </div>
  );
}

function MenuBar() {
  return (
    <div className="flex h-[22px] items-center border-b border-[#333] bg-linear-to-b from-[#949494] to-[#595959] pl-[55px] text-[#f3f3f3]">
      {menus.map(([t, w]) => <span key={t} className={`${w} flex-none whitespace-nowrap`}>{t}</span>)}
      <svg viewBox="0 0 46 12" className="mr-1 ml-auto h-3 w-[46px] flex-none" fill="none" stroke="#262626">
        <path d="M2 9h9" strokeWidth="2" />
        <path d="M18.500 4.500h8v6h-8zM21.500 4V1.500h8v6h-2.500" strokeWidth="1.200" />
        <path d="M36 2.500l7 7M43 2.500l-7 7" strokeWidth="2.400" />
      </svg>
    </div>
  );
}

function Ribbon() {
  return (
    <>
      <div className="flex h-[19px] items-stretch border-r-2 border-[#333] bg-[#545454] pt-0.5 text-[#c9c9c9]">
        <span className="w-[57px] pl-[13px] leading-[16px] tracking-[-.1px]">Home</span>
        <span className="w-[46px] border border-b-0 border-[#3a3a3a] bg-linear-to-b from-[#747474] to-[#5f5f5f] pl-2 leading-[14px] text-white">Insert</span>
        <div className="flex pl-3 leading-[16px]">
          {tabs.map(([t, w]) => <span key={t} className={`${w} flex-none whitespace-nowrap`}>{t}</span>)}
        </div>
        <div className="flex items-center gap-[6px] pb-px">
          <svg viewBox="0 0 13 8" className="h-2 w-[13px]"><rect width="13" height="8" rx="2" fill="#ececec" /><path d="M3.500 5.500h6l-3-3z" fill="#333" /></svg>
          <Arrow />
        </div>
      </div>
      <div className="flex h-5 items-center border-t border-r-2 border-[#333] bg-linear-to-b from-[#4c4c4c] to-[#393939] text-[#f2f2f2]">
        {panels.map(([t, w]) => (
          <div key={t} className={`${w} flex h-full flex-none items-center justify-center gap-1.5 border-r border-[#5f5f5f] bg-linear-to-b from-[#585858] to-[#444] pb-0.5 whitespace-nowrap`}>
            {t}
            {t === "Reference" && <svg viewBox="0 0 6 6" className="mt-0.5 size-[5px]"><path d="M0 0l4 4M5.500 1v4.500H1" stroke="#eee" strokeWidth="1.200" fill="none" /></svg>}
          </div>
        ))}
      </div>
    </>
  );
}

const Swatch = () => <div className="size-[10px] flex-none border border-black bg-white" />;

function Toolbars() {
  return (
    <div className="flex h-[58px] flex-none flex-col bg-[#5c5c5c] text-[#222]">
      <div className="h-[3px] border-b border-[#3a3a3a] bg-[#717171]" />
      <div className="flex h-[24px] border-b border-[#3a3a3a] bg-[#555]">
        <div className="flex w-[646px] flex-none border-r-2 border-[#333]"><GripV /><Tools items={bar1} /></div>
        <div className="flex w-[126px] flex-none border-r-2 border-[#333]"><GripV /><Tools items={bar2} /></div>
        <div className="flex flex-1"><GripV /><Tools items={bar3} />
          <div className="flex h-[22px] flex-1 items-center bg-[#e2e2e2] pt-0.5 pl-[19px]">ISO-25</div>
        </div>
      </div>
      <div className="h-[4px] border-b border-[#3a3a3a] bg-[#616161]" />
      <div className="flex h-[23px] bg-[#555]">
        <div className="flex w-[402px] flex-none border-r-2 border-[#333]">
          <GripV /><Tools items={["layers"]} />
          <div className="mr-px flex h-[21px] w-[299px] flex-none items-center bg-[#e2e2e2] pl-[3px]">
            {["bulb", "sun", "freeze", "lock"].map((n) => <div key={n} className="flex w-[17px] flex-none justify-center"><Icon n={n} size="size-[14px]" /></div>)}
            <span className="mr-1 ml-[1px] flex"><Swatch /></span>
            <span className="flex-1">0</span>
            <span className="mr-[3px]"><Chevron /></span>
          </div>
          <Tools items={["laya", "layb", "layc"]} />
        </div>
        <div className="flex w-[229px] flex-none border-r-2 border-[#333]"><GripV /><Tools items={zoomBar} /></div>
        <div className="flex w-[10px] flex-none"><GripV /></div>
        <div className="flex h-[22px] w-[149px] flex-none items-center bg-[#e2e2e2] pl-[5px]">
          <Swatch /><span className="ml-1 flex-1">ByLayer</span><span className="mr-[3px]"><Chevron /></span>
        </div>
        <div className="mx-[3px] w-px bg-[#222]" />
        <div className="flex h-[22px] w-[159px] flex-none items-center bg-[#e2e2e2] pl-1">
          <div className="h-px w-[60px] bg-black" /><span className="ml-[5px] flex-1">ByLayer</span><span className="mr-[3px]"><Chevron /></span>
        </div>
        <div className="mx-[2.500px] w-px bg-[#222]" />
        <div className="flex h-[22px] w-[125px] flex-none items-center bg-[#e2e2e2] pl-[5px]">
          <div className="h-px w-[35px] bg-black" /><span className="ml-[5px] flex-1">ByLayer</span><span className="mr-[3px]"><Chevron /></span>
        </div>
        <div className="mx-[2.500px] w-px bg-[#222]" />
        <div className="flex h-[22px] w-[119px] flex-none items-center bg-[#c9c9c9] pl-2.5 text-[#7e7e7e]">
          <span className="flex-1">ByColor</span><span className="mr-[3px]"><Chevron c="#aaa" /></span>
        </div>
        <div className="ml-0.5 flex"><GripV /><Tools items={["va", "vb", "vc", "vd", "ve", "|"]} /></div>
        <div className="h-[22px] flex-1 bg-[#f2f2f2]" />
      </div>
    </div>
  );
}

const Column = ({ items, more, w }) => (
  <div className={`${w} flex flex-none flex-col`}>
    <div className="flex-none border border-[#3c3c3c] bg-[#565656]">
      <GripH />
      {items.map((n) => <div key={n} className="flex h-[22px] items-center justify-center pr-px"><Icon n={n} size="size-[15px]" /></div>)}
    </div>
    <div className="mt-px flex-none border border-[#3c3c3c] bg-[#565656]">
      <GripH />
      {more.map((n, i) => <div key={i} className="flex h-[22px] items-center justify-center pr-px"><Icon n={n} size="size-[15px]" /></div>)}
    </div>
  </div>
);

const Comb = ({ x }) => (
  <g>
    {[0, 1, 2, 3, 4, 5].map((i) => <rect key={i} x={x + i * 12.050} y="332.500" width="2" height="42.500" />)}
    {[0, 1, 2, 3, 4].map((i) => <path key={i} d={`M${x + 6 + i * 12.050} 326.500v24.500h2v-24.500M${x + 6 + i * 12.050} 380.500v-24.500h2v24.500`} />)}
  </g>
);

function Canvas() {
  return (
    <div className="relative h-full w-[1020px] flex-none overflow-hidden bg-[#212830]">
      <svg viewBox="60 144 1020 473" className="h-[473px] w-[1020px]" fill="none">
        <circle cx="997" cy="226.500" r="53" stroke="#3f4650" strokeWidth="14" />
        <rect x="973.500" y="313.500" width="47" height="17" rx="4" fill="#848a91" stroke="#6f757d" />
        <text x="977.500" y="325" fontSize="11" fill="#4d545d" textLength="24">WCS</text>
        <path d="M1007.500 319.500h8l-4 4z" stroke="#aab0b7" />
        <path d="M381 353.500H754M381 327v53M754.500 327v53M438.500 327v53M500 327v53M648.500 327v53M711 327v53" stroke="#12149a" strokeWidth="2" />
        <g stroke="#c21fc2" strokeWidth="1.300">
          {[27.500, 42.500, 57.500, 72.500, 87.500].map((r) => <circle key={r} cx="868.500" cy="353.500" r={r} />)}
        </g>
        <g stroke="#e0e3e6" strokeWidth="1.200">
          <circle cx="248.500" cy="353.500" r="105.500" />
          <path d="M382 326.500Q378.500 326.500 377.200 322A132.500 132.500 0 1 0 377.200 385Q378.500 380.500 382 380.500H753.500Q757.500 380.500 758.500 385A114.500 114.500 0 1 0 758.500 322Q757.500 326.500 753.500 326.500Z" />
          <g strokeWidth="1"><Comb x={438} /><Comb x={648.500} /></g>
          <path d="M395.500 349.500h28v9h-28zM560.500 349.500h28v9h-28zM718.500 349.500h28v9h-28zM574 280v127M257.500 144v32M257.500 183v45M209 179.500h46M260 179.500h46M255.500 176.500h4v6h-4z" />
          <path d="M427.500 489.500V474A39 39 0 0 1 467 435.300L526.500 440.500 527.500 431.500 554.500 433.500 553.500 442.500 615 447.300A40 40 0 0 1 653.500 487V496.500H662V523.500H653V555.500H427.500V516.500H418.500V489.500Z" />
          <path d="M442.500 540.500V473A23.500 23.500 0 0 1 467 450.500L613 462.500A26 26 0 0 1 638 488V540.500Z" />
        </g>
        <rect x="971.500" y="200.500" width="51" height="51" fill="#aaacae" stroke="#b9bbbc" />
        <rect x="981" y="210" width="32" height="32" fill="#9ba3a8" />
        <text x="997" y="230.500" textAnchor="middle" fontSize="13" fontWeight="700" fill="#4a5058" textLength="22" lengthAdjust="spacingAndGlyphs">TOP</text>
        <g className="font-['Liberation_Sans',sans-serif]" fontSize="20.500" fontWeight="700" fill="#a6a9ac" textAnchor="middle">
          <text x="997" y="177">N</text><text x="1053" y="234">E</text><text x="997" y="290">S</text><text x="940.500" y="234">W</text>
        </g>
        <rect x="1044" y="356" width="32" height="212" rx="3" fill="#5a6067" stroke="#666c73" />
        <g stroke="#40464d" strokeWidth="1">
          <path d="M1046 413.500h28M1046 520.500h28" stroke="#656b72" />
          <circle cx="1070" cy="361.500" r="3" /><circle cx="1070" cy="562.500" r="3" />
          <path d="M1049.500 386c0-14 21-14 21 0s-21 14-21 0zM1060 375.500h10.500V386M1053 386c0-9 14-9 14 0s-14 9-14 0z" />
          <circle cx="1060" cy="386" r="4" />
          <path d="M1058.500 405h4l-2 2.500zM1058.500 475h4l-2 2.500zM1058.500 513h4l-2 2.500z" fill="#40464d" />
          <path d="M1054 439c-1-4-5-7-5-10 0-1 2-1 4 1l2 2-3-10c0-2 2-2 3 0l2.500 7-.5-10c0-2 3-2 3 0l.5 9 2.500-8c1-2 3-1 2.500 1l-1.500 8 4-6c1-1.500 3-1 2.500 1-1.500 4-2 11-5 15z" />
          <path d="M1049 447l16 15M1064 446l-15 15M1049 451v-4h4M1060 446h4v4M1049 457v4h4" />
          <circle cx="1064" cy="460" r="5" /><path d="M1067.500 463.500l4 4" strokeWidth="2.500" />
          <path d="M1058 504v-16h-1.500l3.500-4 3.500 4h-1.500v16zM1056 492c-11 2-9 7 4 7s14-5 4-7M1052 501l-3-3 4-2" />
          <path d="M1048.500 525.500h6v6h-6zM1056.500 525.500h6v6h-6zM1064.500 525.500h6v6h-6zM1048.500 534.500h16v13h-16z" />
          <path d="M1053 537v8l6-4z" fill="#40464d" />
        </g>
      </svg>
      <div className="absolute top-1.5 left-1 text-[12px] leading-4 text-[#e4e6e8]">[−][Top][2D Wireframe]</div>
    </div>
  );
}

const sections = [
  ["General", [["Color", "ByLayer", "swatch"], ["Layer", "0"], ["Linetype", "ByLayer", "line"], ["Linetype scale", "1.00"], ["Lineweight", "ByLayer", "line"], ["Transparency", "ByLayer"], ["Thickness", "0.00"]]],
  ["3D Visualization", [["Material", "ByLayer"]]],
  ["Plot style", [["Plot style", "ByColor", "dim"], ["Plot style table", "None"], ["Plot table attache...", "Model", "dim"], ["Plot table type", "Not available", "dim"]]],
  ["View", [["Center X", "181.21", "dim"], ["Center Y", "-5.42", "dim"], ["Center Z", "0.00", "dim"], ["Height", "282.21", "dim"], ["Width", "588.86", "dim"]]],
];

function Properties() {
  return (
    <div className="flex flex-1 flex-col overflow-hidden bg-[#5b5b5b] text-[#f0f0f0]">
      <div className="flex h-[22px] flex-none items-center bg-[#525252] pl-2">
        <svg viewBox="0 0 4 10" className="mr-[5px] h-2.5 w-1"><path d="M.5 0v10M3 0v10" stroke="#3c3c3c" strokeDasharray="1 1" /></svg>
        <span className="tracking-[-.55px]">PROPERTIES</span>
      </div>
      <div className="mt-3 flex flex-none items-center pl-[7px]">
        <div className="flex h-6 w-[212px] items-center border border-[#383838] bg-linear-to-b from-[#5d5d5d] to-[#757575] pl-[3px]">
          <span className="flex-1">No selection</span>
          <div className="flex h-full w-[14px] items-center justify-center border-l border-[#383838]"><Arrow /></div>
        </div>
        <svg viewBox="0 0 16 16" className="ml-2 size-4">
          <path d="M1 3h8v8H1z" fill="#9cb8dc" stroke="#16243c" /><path d="M5 6h8v8.500H5z" fill="#c6daf4" stroke="#16243c" /><path d="M11.500 0v7M8 3.500h7" stroke="#3fae3a" strokeWidth="2.500" />
        </svg>
        <svg viewBox="0 0 16 16" className="ml-2 size-4" fill="none" stroke="#f2f2f2" strokeWidth="1.200"><path d="M8 1.500v4M8 10.500v4M1.500 8h4M10.500 8h4M5.500 5.500h5v5h-5z" /></svg>
        <svg viewBox="0 0 16 16" className="ml-[9px] size-4 overflow-visible" fill="none" stroke="#f2f2f2" strokeWidth="1.200"><path d="M7 2v4M7 10v4M1 8h4M9 8h4M5 6h4v4H5z" /><path d="M13 0L9.500 5h3L11 8.500 16 4h-3l2-4z" fill="#f2b03a" stroke="none" /><path d="M10 10h5.500v7H10z" fill="#fff" stroke="none" /><path d="M11 11.500h4M11 13.500h4M11 15.500h4" stroke="#333" strokeWidth=".9" /></svg>
      </div>
      <div className="mt-[3px] flex flex-none flex-col gap-[3px] pr-[19px] pl-3">
        {sections.map(([title, rows]) => (
          <div key={title}>
            <div className="flex h-5 items-center justify-between border border-[#353535] bg-[#484848] pr-[7px] pl-1.5 font-bold tracking-[-.4px]">
              {title}<span className="h-0.5 w-1.5 bg-white" />
            </div>
            <div className="ml-[13px] border-l border-[#505050]">
              <div className="ml-[3px] border-l border-[#505050]">
                {rows.map(([k, v, kind]) => (
                  <div key={k} className="flex h-[19px] border-r border-b border-[#505050] tracking-[-.2px]">
                    <span className={`w-[115px] flex-none overflow-hidden border-r border-[#505050] pl-1.5 leading-[20px] whitespace-nowrap ${k.endsWith("...") ? "[word-spacing:2px]" : ""}`}>{k}</span>
                    <div className={`flex flex-1 items-center pb-px pl-0.5 leading-[16px] ${kind === "dim" ? "text-[#a9a9a9]" : ""}`}>
                      {kind === "swatch" && <span className="mr-1.5 ml-px size-[10px] border border-black bg-white" />}
                      {kind === "line" && <span className="mr-1 ml-0.5 h-px w-[62px] bg-white" />}
                      {v}
                    </div>
                  </div>
                ))}
              </div>
            </div>
          </div>
        ))}
      </div>
    </div>
  );
}

export default function App() {
  return (
    <div className="relative flex h-[617px] w-[1383px] overflow-hidden bg-[#5b5b5b] font-['Open_Sans',sans-serif] text-[12px] leading-4 tracking-[-.28px]">
      <div className="flex w-[3px] flex-none flex-col bg-[#e6e6e6]">
        <div className="h-3.5 bg-[#f0c890]" />
        <div className="h-[23px] bg-[#1b8a78]" />
      </div>
      <div className="flex w-[1380px] flex-none flex-col">
        <TitleBar />
        <MenuBar />
        <Ribbon />
        <Toolbars />
        <div className="flex h-[473px] flex-none overflow-hidden">
          <Column items={drawCol} more={["measure", "measure"]} w="w-[25px]" />
          <div className="w-1 flex-none" />
          <Column items={modCol} more={["ordf", "ordb", "ordf"]} w="w-[24px]" />
          <div className="w-1 flex-none bg-[#626262]" />
          <Canvas />
          <Properties />
        </div>
      </div>
      <div className="absolute top-px left-[3px] flex h-[41px] w-[41px] items-start border border-black bg-linear-to-b from-[#c4c4c4] to-[#858585]">
        <svg viewBox="0 0 26 28" className="mt-0.5 ml-[3px] h-7 w-[26px] flex-none">
          <path d="M0 26L8.500 1.500h7.500L24.500 26h-6L12 7 6 26z" fill="#c9282d" />
          <path d="M10 1.500h6L19 12 12.500 6z" fill="#e2474b" />
          <path d="M4 18c4-5 10-6 15-4l2 6c-6-3-10-3-13-1.500L3 22z" fill="#ae1c22" />
          <path d="M9.500 18.500l3-1 3 8.500h-4z" fill="#c9282d" />
        </svg>
        <svg viewBox="0 0 6 4" className="mt-[18px] ml-px h-1 w-[7px]"><path d="M0 0h6L3 4z" fill="#2c2c2c" /></svg>
      </div>
    </div>
  );
}
